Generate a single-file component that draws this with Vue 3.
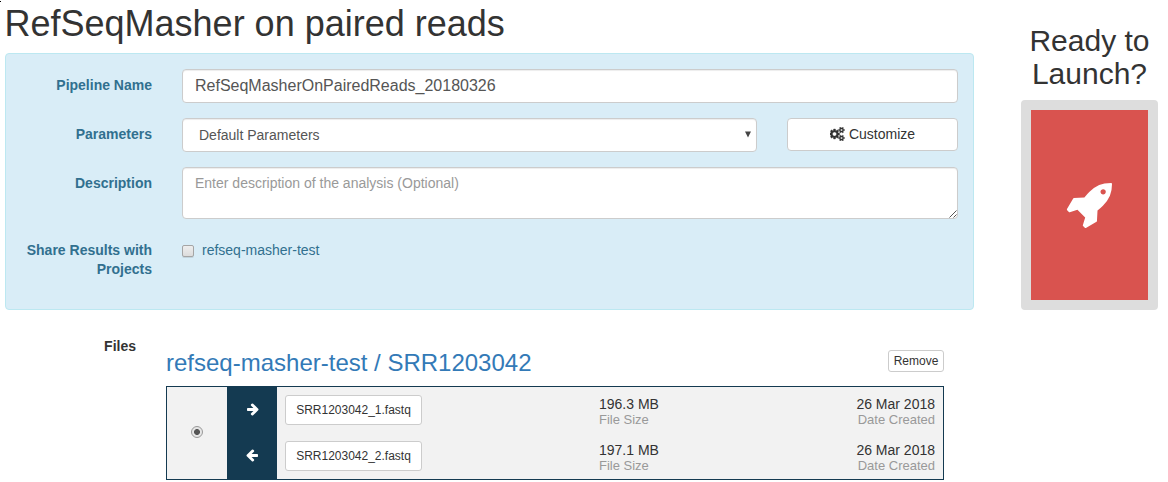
<script setup>
import { ref } from 'vue'

const name = ref('RefSeqMasherOnPairedReads_20180326')
const description = ref('')
const files = [
  { name: 'SRR1203042_1.fastq', size: '196.3 MB', date: '26 Mar 2018', forward: true },
  { name: 'SRR1203042_2.fastq', size: '197.1 MB', date: '26 Mar 2018', forward: false },
]
</script>

<template>
  <div class="page">
    <span class="corner"></span>
    <main class="main">
      <h1>RefSeqMasher on paired reads</h1>
      <section class="panel">
        <div class="row">
          <label>Pipeline Name</label>
          <input v-model="name" class="control name" type="text" />
        </div>
        <div class="row">
          <label>Parameters</label>
          <div class="control select">
            <span>Default Parameters</span>
            <svg class="caret" viewBox="0 0 6 7"><path d="M0 0.5h6L3 6.5z" /></svg>
          </div>
          <button class="btn customize">
            <svg class="cogs" viewBox="0 0 1920 1792">
              <path d="M832 896q0-106-75-181t-181-75-181 75-75 181 75 181 181 75 181-75 75-181zm768 512q0-52-38-90t-90-38-90 38-38 90q0 53 37.5 90.5t90.5 37.5 90.5-37.5 37.5-90.5zm0-1024q0-52-38-90t-90-38-90 38-38 90q0 53 37.5 90.5t90.5 37.5 90.5-37.5 37.5-90.5zm-384 421v185q0 10-7 19.5t-16 10.5l-155 24q-11 35-32 76 34 48 90 115 7 11 7 20 0 12-7 19-23 30-82.5 89.5t-78.5 59.5q-11 0-21-7l-115-90q-37 19-77 31-11 108-23 155-7 24-30 24h-186q-11 0-20-7.5t-10-17.5l-23-153q-34-10-75-31l-118 89q-7 7-20 7-11 0-21-8-144-133-144-160 0-9 7-19 10-14 41-53t47-61q-23-44-35-82l-152-24q-10-1-17-9.5t-7-19.5v-185q0-10 7-19.5t16-10.5l155-24q11-35 32-76-34-48-90-115-7-11-7-20 0-12 7-20 22-30 82-89t79-59q11 0 21 7l115 90q34-18 77-32 11-108 23-154 7-24 30-24h186q11 0 20 7.5t10 17.5l23 153q34 10 75 31l118-89q8-7 20-7 11 0 21 8 144 133 144 160 0 8-7 19-12 16-42 54t-45 60q23 48 34 82l152 23q10 2 17 10.5t7 19.5zm640 533v140q0 16-149 31-12 27-30 52 51 113 51 138 0 4-4 7-122 71-124 71-8 0-46-47t-52-68q-20 2-30 2t-30-2q-14 21-52 68t-46 47q-2 0-124-71-4-3-4-7 0-25 51-138-18-25-30-52-149-15-149-31v-140q0-16 149-31 13-29 30-52-51-113-51-138 0-4 4-7 4-2 35-20t59-34 30-16q8 0 46 46.5t52 67.5q20-2 30-2t30 2q51-71 92-112l6-2q4 0 124 70 4 3 4 7 0 25-51 138 17 23 30 52 149 15 149 31zm0-1024v140q0 16-149 31-12 27-30 52 51 113 51 138 0 4-4 7-122 71-124 71-8 0-46-47t-52-68q-20 2-30 2t-30-2q-14 21-52 68t-46 47q-2 0-124-71-4-3-4-7 0-25 51-138-18-25-30-52-149-15-149-31v-140q0-16 149-31 13-29 30-52-51-113-51-138 0-4 4-7 4-2 35-20t59-34 30-16q8 0 46 46.5t52 67.5q20-2 30-2t30 2q51-71 92-112l6-2q4 0 124 70 4 3 4 7 0 25-51 138 17 23 30 52 149 15 149 31z" />
            </svg>
            Customize
          </button>
        </div>
        <div class="row">
          <label>Description</label>
          <div class="area-wrap">
            <textarea v-model="description" class="control area" placeholder="Enter description of the analysis (Optional)"></textarea>
            <svg class="grip" viewBox="0 0 8 8"><path d="M0.5 7.5l7-7M4.5 7.5l3-3" /></svg>
          </div>
        </div>
        <div class="row share">
          <label>Share Results with Projects</label>
          <div class="check"><span class="box"></span>refseq-masher-test</div>
        </div>
      </section>

      <section class="files">
        <label class="files-label">Files</label>
        <div class="files-body">
          <div class="files-head">
            <h3>refseq-masher-test / SRR1203042</h3>
            <button class="btn remove">Remove</button>
          </div>
          <div class="pair">
            <div class="pick"><span class="radio"></span></div>
            <div class="lines">
              <div v-for="f in files" :key="f.name" class="line">
                <div class="dir">
                  <svg class="arrow" :class="{ back: !f.forward }" viewBox="0 0 1664 1792">
                    <path d="M1600 960q0 54-37 91l-651 651q-39 37-91 37-51 0-90-37l-75-75q-38-38-38-91t38-91l293-293h-704q-52 0-84.5-37.5t-32.5-90.5v-128q0-53 32.5-90.5t84.5-37.5h704l-293-294q-38-36-38-90t38-90l75-75q38-38 90-38 53 0 91 38l651 651q37 35 37 90z" />
                  </svg>
                </div>
                <div class="cell file"><button class="btn fname">{{ f.name }}</button></div>
                <div class="cell size"><div>{{ f.size }}</div><small>File Size</small></div>
                <div class="cell date"><div>{{ f.date }}</div><small>Date Created</small></div>
              </div>
            </div>
          </div>
        </div>
      </section>
    </main>

    <aside class="side">
      <h2>Ready to Launch?</h2>
      <div class="launch">
        <svg class="rocket" viewBox="0 0 1664 1664">
          <path d="M1440 320q0-40-28-68t-68-28-68 28-28 68 28 68 68 28 68-28 28-68zm224-288q0 249-75.5 430.5t-253.5 360.5q-81 80-195 176l-20 379q-2 16-16 26l-384 224q-7 4-16 4-12 0-23-9l-64-64q-13-14-8-32l85-276-281-281-276 85q-3 1-9 1-14 0-23-9l-64-64q-17-19-5-39l224-384q10-14 26-16l379-20q96-114 176-195 188-187 358-258t431-71q14 0 24 9.5t10 22.5z" />
        </svg>
      </div>
    </aside>
  </div>
</template>

<style>
body { background: #fff; overflow: hidden; }
</style>

<style scoped>
* { box-sizing: border-box; }
.page {
  position: relative;
  display: flex;
  width: 1168px;
  height: 482px;
  padding-left: 5px;
  overflow: hidden;
  font: 14px/20px "Liberation Sans", Arial, sans-serif;
  color: #333;
}
.corner { position: absolute; left: 0; top: 1px; width: 1px; height: 1px; background: #000; }
h1, h2, h3 { margin: 0; font-weight: 400; }
.main { width: 969px; }
h1 { height: 49px; margin: 4px 0 0 -0.5px; font-size: 36px; line-height: 40px; white-space: nowrap; }
.panel {
  height: 257px;
  padding: 15px 15px 0 16px;
  background: #d9edf7;
  border: 1px solid #bce8f1;
  border-radius: 4px;
  color: #31708f;
}
.row { display: flex; margin-bottom: 15px; }
.row label {
  width: 130px;
  flex: none;
  margin-right: 30px;
  padding-top: 7px;
  text-align: right;
  font-weight: 700;
  line-height: 19px;
}
.control {
  display: block;
  height: 34px;
  margin: 0;
  padding: 6px 12px;
  background: #fff;
  border: 1px solid #ccc;
  border-radius: 4px;
  box-shadow: inset 0 1px 1px rgba(0, 0, 0, 0.075);
  color: #555;
  font: 14px/20px "Liberation Sans", Arial, sans-serif;
  outline: none;
}
.name { width: 776px; font-size: 16px; }
.select { display: flex; width: 575px; padding: 6px 5px 6px 16px; justify-content: space-between; align-items: center; }
.caret { width: 6px; height: 7px; margin-top: -1px; fill: #444; }
.btn {
  margin: 0;
  background: #fff;
  border: 1px solid #ccc;
  border-radius: 4px;
  color: #333;
  font: 14px/20px "Liberation Sans", Arial, sans-serif;
  white-space: nowrap;
}
.customize {
  display: flex;
  width: 171px;
  height: 33px;
  margin-left: 30px;
  padding: 0 0 2px;
  align-items: center;
  justify-content: center;
  gap: 4px;
}
.cogs { width: 15px; height: 14px; fill: #333; stroke: #333; stroke-width: 50; }
.area-wrap { position: relative; width: 776px; height: 52px; }
.area { width: 776px; height: 52px; padding-top: 5px; resize: none; }
.area::placeholder { color: #999; opacity: 1; }
.grip { position: absolute; right: 1px; bottom: 1px; width: 8px; height: 8px; fill: none; stroke: #555; stroke-width: 1; }
.share label { padding-top: 7px; }
.share { margin-top: 15px; }
.check { display: flex; height: 20px; margin-top: 6px; align-items: center; }
.box {
  width: 12px;
  height: 12px;
  margin: 2px 8px 0 0;
  border: 1px solid #a5a5a5;
  border-radius: 2px;
  background: linear-gradient(#eee, #dcdcdc);
  box-shadow: 0 1px 0 rgba(0, 0, 0, 0.1);
}
.files { display: flex; padding-top: 26px; }
.files-label { width: 131px; margin-right: 30px; text-align: right; font-weight: 700; }
.files-body { width: 778px; padding-top: 13px; }
.files-head { display: flex; height: 37px; justify-content: space-between; }
h3 { color: #337ab7; font-size: 24px; line-height: 28px; white-space: nowrap; }
.remove { width: 56px; height: 22px; margin-top: 1px; padding: 0; border-radius: 3px; font-size: 12px; line-height: 18px; }
.pair { display: flex; height: 94px; border: 1px solid #143a51; background: #f2f2f2; }
.pick { display: flex; width: 60px; align-items: center; justify-content: center; }
.radio {
  width: 12px;
  height: 12px;
  margin-top: -2px;
  border: 1px solid #999;
  border-radius: 50%;
  background: radial-gradient(circle, #555 0 2.6px, #e6e6e6 3.3px);
}
.lines { flex: 1; }
.line { display: flex; height: 46px; }
.dir { display: flex; width: 50px; padding-bottom: 2px; align-items: center; justify-content: center; background: #143a51; }
.arrow { width: 13px; height: 14px; fill: #fff; }
.back { transform: scaleX(-1); }
.cell { line-height: 17px; padding-top: 9px; }
.cell small { display: block; color: #999; font-size: 13px; line-height: 14px; }
.file { width: 322px; padding: 8px 0 0 8px; }
.fname { width: 137px; height: 30px; padding: 0; border-radius: 3px; font-size: 12px; line-height: 18px; }
.size { flex: 1; }
.date { padding-right: 8px; text-align: right; }
.side { width: 137px; margin-left: 47px; padding-top: 24px; }
h2 { height: 76px; font-size: 30px; line-height: 33px; text-align: center; }
.launch {
  display: flex;
  height: 210px;
  padding: 1px 1px 0 0;
  align-items: center;
  justify-content: center;
  border: 10px solid #ddd;
  border-radius: 4px;
  background: #d9534f;
}
.rocket { width: 46px; height: 46px; fill: #fff; }
</style>
